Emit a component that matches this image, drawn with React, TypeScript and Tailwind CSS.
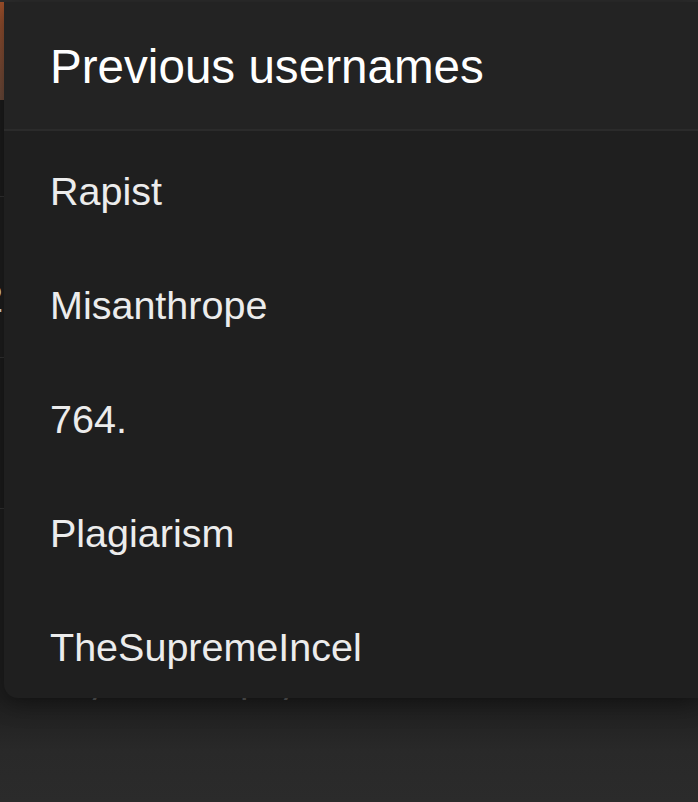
import React from "react";

const names = ["Rapist", "Misanthrope", "764.", "Plagiarism", "TheSupremeIncel"];

export default function App() {
  return (
    <div
      className="relative w-[698px] h-[802px] overflow-hidden bg-[#2a2a2a]"
      style={{ fontFamily: '"Liberation Sans", Arial, Helvetica, sans-serif' }}
    >
      {/* background page content */}
      <div className="flex flex-col h-full">
        <div className="h-[2px] shrink-0 bg-[#2e2e2e]" />
        <div className="flex h-[698px] shrink-0 bg-[#1e1e1e]">
          <div className="w-[10px] shrink-0 flex flex-col overflow-hidden">
            <div className="h-[98px] shrink-0 bg-gradient-to-b from-[#a0502a] to-[#6b4a3a]" />
            <div className="h-[96px] shrink-0 bg-[#1c1c1c]" />
            <div className="h-[1px] shrink-0 bg-[#333]" />
            <div className="h-[160px] shrink-0 bg-[#1e1e1e] text-[#ddd] text-[38px] leading-[56px] pt-[18px] -ml-[18px]">
              <div>t</div>
              <div>2</div>
            </div>
            <div className="h-[1px] shrink-0 bg-[#333]" />
            <div className="h-[150px] shrink-0 bg-[#1c1c1c]" />
            <div className="h-[1px] shrink-0 bg-[#333]" />
            <div className="flex-1 bg-[#1e1e1e]" />
          </div>
          <div className="flex-1 pt-[662px]">
            <div className="flex text-[38px] leading-[40px] text-[#5a5a5a]">
              <span className="ml-[76px]">y</span>
              <span className="ml-[135px]">p</span>
              <span className="ml-[16px]">y</span>
            </div>
          </div>
        </div>
        <div className="flex-1 bg-gradient-to-b from-[#1f1f1f] via-[#292929] to-[#2b2b2b]" />
      </div>

      {/* overlay panel */}
      <div className="absolute left-[4px] top-[2px] right-0 h-[696px] rounded-bl-[14px] bg-[#1f1f1f] shadow-[0_4px_24px_rgba(0,0,0,0.45)] overflow-hidden flex flex-col">
        <div className="h-[127px] shrink-0 bg-[#232323] flex items-start pl-[46px] pt-[38px]">
          <span className="text-[47.6px] leading-[54px] text-white">Previous usernames</span>
        </div>
        <div className="h-[2px] shrink-0 bg-[#2b2b2b]" />
        <div className="flex flex-col gap-[66px] pt-[36px]">
          {names.map((n) => (
            <div key={n} className="h-[48px] shrink-0 pl-[46px] flex items-center">
              <span className="text-[39.5px] leading-[48px] text-[#ececec]">{n}</span>
            </div>
          ))}
        </div>
      </div>
    </div>
  );
}
